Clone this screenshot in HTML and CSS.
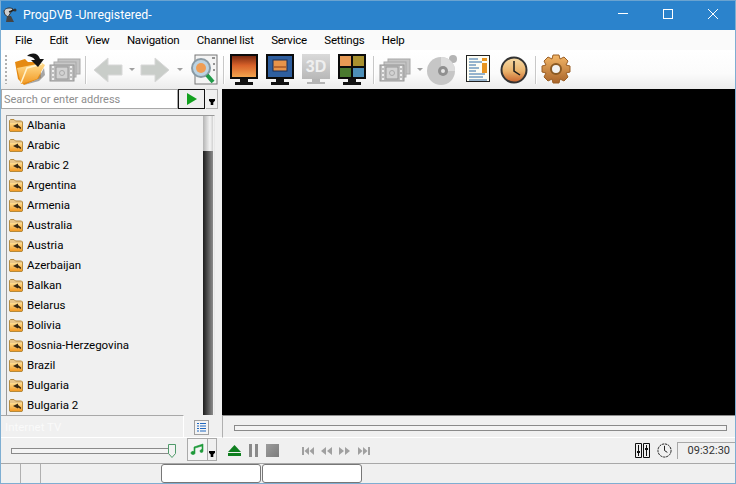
FILE: index.html
```html
<!DOCTYPE html>
<html lang="en">
<head>
<meta charset="utf-8">
<title>ProgDVB -Unregistered-</title>
<link rel="stylesheet" href="styles.css">
</head>
<body>
<svg class="sprite" aria-hidden="true">
  <defs>
    <linearGradient id="gOrange" x1="0" y1="0" x2="0" y2="1"><stop offset="0" stop-color="#ffdc8e"/><stop offset="1" stop-color="#f29a24"/></linearGradient>
    <linearGradient id="gSky" x1="0" y1="0" x2="0" y2="1"><stop offset="0" stop-color="#7a2a10"/><stop offset=".45" stop-color="#d9622a"/><stop offset="1" stop-color="#f2a44e"/></linearGradient>
    <linearGradient id="gGrey" x1="0" y1="0" x2="0" y2="1"><stop offset="0" stop-color="#dadada"/><stop offset="1" stop-color="#b8b8b8"/></linearGradient>
    <linearGradient id="gClock" x1="0" y1="0" x2="0" y2="1"><stop offset="0" stop-color="#f7dca8"/><stop offset=".55" stop-color="#eab36c"/><stop offset="1" stop-color="#c8622c"/></linearGradient>
    <linearGradient id="gGear" x1="0" y1="0" x2="0" y2="1"><stop offset="0" stop-color="#f4b768"/><stop offset="1" stop-color="#a8642a"/></linearGradient>
    <linearGradient id="gCtl" x1="0" y1="0" x2="1" y2="1"><stop offset="0" stop-color="#9c9c9c"/><stop offset="1" stop-color="#7c7c7c"/></linearGradient>
    <symbol id="folder" viewBox="0 0 14 13">
      <path d="M.5 3V1.500L1.500.5h3.500l1.500 1.500h6l1 1v9l-.5.5h-12l-.5-.5z" fill="#e8c588" stroke="#b58a3e"/>
      <rect x="1" y="4" width="12" height="8" fill="url(#gOrange)"/>
      <path d="M4 7l5-2.500v1.500l3 2.500v1.500l-3-1.500v1z" fill="#3a2a14"/>
    </symbol>
    <symbol id="film" viewBox="0 0 32 24">
      <rect x="9" y="1" width="22" height="15" fill="#c4c4c4" stroke="#a8a8a8"/>
      <rect x="5" y="4" width="22" height="15" fill="#c8c8c8" stroke="#a8a8a8"/>
      <rect x="1" y="7" width="24" height="16" fill="#bdbdbd" stroke="#969696"/>
      <rect x="7" y="9" width="12" height="12" fill="#d2d2d2" stroke="#999"/>
      <path d="M3 9h2M3 13h2M3 17h2M3 21h2M21 9h2M21 13h2M21 17h2M21 21h2" stroke="#eee" stroke-width="2"/>
      <circle cx="13" cy="15" r="2.500" fill="none" stroke="#aaa"/>
    </symbol>
    <symbol id="monitor" viewBox="0 0 28 32">
      <rect x="0" y="0" width="28" height="25" fill="#0c0c0c"/>
      <rect x="10" y="25" width="8" height="3" fill="#111"/>
      <rect x="5" y="28" width="18" height="3" fill="#111"/>
    </symbol>
    <symbol id="stem-arrow" viewBox="0 0 7 7">
      <path d="M0 0h7v2L5 4v3H2V4L0 2z" fill="#000"/>
    </symbol>
  </defs>
</svg>

<div class="window">
  <header class="titlebar">
    <svg class="app-icon" viewBox="0 0 16 16" width="16" height="16">
      <path d="M1 4c1-3 6-4 9-2L5 10C3 9 1 7 1 4z" fill="#cfcfcf" stroke="#333"/>
      <path d="M6 5l5-2" stroke="#222" stroke-width="1.500"/>
      <circle cx="12" cy="3" r="1.500" fill="#333"/>
      <path d="M4 9l-1 6h8L8 9z" fill="#444"/>
    </svg>
    <span class="title-text">ProgDVB -Unregistered-</span>
    <div class="caption-buttons">
      <button class="caption-btn"><svg viewBox="0 0 10 10" width="10" height="10"><path d="M0 4.500h10" stroke="#fff"/></svg></button>
      <button class="caption-btn"><svg viewBox="0 0 10 10" width="10" height="10"><rect x=".5" y=".5" width="9" height="9" fill="none" stroke="#fff"/></svg></button>
      <button class="caption-btn"><svg viewBox="0 0 10 10" width="10" height="10"><path d="M0 0l10 10M10 0L0 10" stroke="#fff"/></svg></button>
    </div>
  </header>

  <nav class="menubar">
    <span class="menu-item">File</span>
    <span class="menu-item">Edit</span>
    <span class="menu-item">View</span>
    <span class="menu-item">Navigation</span>
    <span class="menu-item">Channel list</span>
    <span class="menu-item">Service</span>
    <span class="menu-item">Settings</span>
    <span class="menu-item">Help</span>
  </nav>

  <div class="toolbar">
    <span class="grip"></span>
    <svg class="t-open" viewBox="0 0 32 33" width="32" height="33">
      <path d="M2 9l10-3 3 3 12 0 1 16-17 7-6-6z" fill="#e58a12"/>
      <path d="M8 31L4 15l25-5 3 2-8 14z" fill="url(#gOrange)"/>
      <path d="M8 30l6-15 15-4" fill="none" stroke="#fff2cc" stroke-width="1.500"/>
      <path d="M11 32l14-6 6-11 1 7-6 6z" fill="#8a8a8a" opacity=".75"/>
      <path d="M14 3c5-4 11-3 13 3l4 0-6 8-7-7 4 0c-2-3-5-4-8-4z" fill="#141414"/>
    </svg>
    <svg class="t-film" width="32" height="24"><use href="#film"/></svg>
    <span class="t-sep"></span>
    <svg class="t-back" viewBox="0 0 30 26" width="30" height="26"><path d="M15 1v7h14v10H15v7L1 13z" fill="#c9cdc9" stroke="#d8d8d8"/></svg>
    <span class="caret t-caret1"></span>
    <svg class="t-fwd" viewBox="0 0 30 26" width="30" height="26"><path d="M15 1v7H1v10h14v7l14-12z" fill="#c9cdc9" stroke="#d8d8d8"/></svg>
    <span class="caret t-caret2"></span>
    <svg class="t-preview" viewBox="0 0 27 32" width="27" height="32">
      <rect x="4" y="1" width="22" height="29" fill="#f4f4f4" stroke="#777"/>
      <path d="M21 4h3M22 10h2M22 16h2" stroke="#333"/>
      <circle cx="10" cy="14" r="9" fill="#bcd3e2" stroke="#8a9aa4" stroke-width="2"/>
      <circle cx="10" cy="14" r="5" fill="#ef9d55"/>
      <path d="M16 21l6 7" stroke="#1f9a48" stroke-width="4"/>
    </svg>
    <span class="t-sep t-sep2"></span>
    <svg class="t-mon1" width="28" height="32"><use href="#monitor"/><rect x="2" y="2" width="24" height="21" fill="url(#gSky)"/></svg>
    <svg class="t-mon" width="28" height="32"><use href="#monitor"/><rect x="2" y="2" width="24" height="21" fill="#2f5f9f"/><rect x="7" y="6" width="14" height="11" fill="#e8944a" stroke="#1c2f55"/><path d="M8 13h12" stroke="#8a3a14"/></svg>
    <svg class="t-mon" viewBox="0 0 28 32" width="28" height="32">
      <rect width="28" height="25" fill="url(#gGrey)"/>
      <rect x="10" y="25" width="8" height="3" fill="#b4b4b4"/><rect x="5" y="28" width="18" height="2" fill="#b4b4b4"/>
      <text class="t3d" x="14" y="18" text-anchor="middle">3D</text>
    </svg>
    <svg class="t-mon" width="28" height="32"><use href="#monitor"/><rect x="2" y="2" width="11" height="10" fill="#e79a55"/><rect x="15" y="2" width="11" height="10" fill="#a8912f"/><rect x="2" y="14" width="11" height="9" fill="#4a7a2f"/><rect x="15" y="14" width="11" height="9" fill="#4d8fb8"/></svg>
    <span class="t-sep t-sep3"></span>
    <svg class="t-film2" width="32" height="24"><use href="#film"/></svg>
    <span class="caret t-caret3"></span>
    <svg class="t-disc" viewBox="0 0 32 32" width="32" height="32">
      <circle cx="27" cy="5" r="4" fill="#b4b4b4"/>
      <circle cx="15" cy="17" r="14" fill="#c6c6c6"/>
      <path d="M15 3a14 14 0 0 1 14 14H15z" fill="#dcdcdc"/>
      <circle cx="17" cy="17" r="5" fill="#8f8f8f"/><circle cx="17" cy="17" r="2" fill="#e6e6e6"/>
    </svg>
    <svg class="t-info" viewBox="0 0 24 27" width="24" height="27">
      <rect x=".5" y=".5" width="23" height="26" fill="#fdfdf4" stroke="#222"/>
      <path d="M3 4h9M3 7h13M3 10h7M3 13h10M3 16h7M3 19h16M3 22h14M3 25h18" stroke="#2f6aa6"/>
      <rect x="16" y="3" width="5" height="3" fill="#e89420"/>
      <rect x="16" y="8" width="5" height="10" fill="#e89420"/>
    </svg>
    <svg class="t-clock" viewBox="0 0 28 28" width="28" height="28">
      <circle cx="14" cy="14" r="12.500" fill="url(#gClock)" stroke="#333" stroke-width="2"/>
      <path d="M14 5v10l6 4" fill="none" stroke="#1a1a1a" stroke-width="1.500"/>
    </svg>
    <span class="t-sep t-sep4"></span>
    <svg class="t-gear" viewBox="0 0 30 30" width="30" height="30">
      <path d="M12 1h6l1 4 4-2 4 4-2 4 4 1v6l-4 1 2 4-4 4-4-2-1 4h-6l-1-4-4 2-4-4 2-4-4-1v-6l4-1-2-4 4-4 4 2z" fill="url(#gGear)" stroke="#9a5e24"/>
      <circle cx="15" cy="15" r="5" fill="#f2f2f2" stroke="#8a5a24" stroke-width="2"/>
    </svg>
  </div>

  <main class="main">
    <aside class="side">
      <div class="addressbar">
        <input class="address" placeholder="Search or enter address" aria-label="address">
        <button class="go"><svg viewBox="0 0 12 12" width="12" height="12"><path d="M1 0l10 6-10 6z" fill="#12a01e"/></svg></button>
        <span class="drop"><svg width="6" height="6"><use href="#stem-arrow"/></svg></span>
      </div>
      <div class="listframe">
        <ul class="list">
          <li class="row"><svg class="fi"><use href="#folder"/></svg>Albania</li>
          <li class="row"><svg class="fi"><use href="#folder"/></svg>Arabic</li>
          <li class="row"><svg class="fi"><use href="#folder"/></svg>Arabic 2</li>
          <li class="row"><svg class="fi"><use href="#folder"/></svg>Argentina</li>
          <li class="row"><svg class="fi"><use href="#folder"/></svg>Armenia</li>
          <li class="row"><svg class="fi"><use href="#folder"/></svg>Australia</li>
          <li class="row"><svg class="fi"><use href="#folder"/></svg>Austria</li>
          <li class="row"><svg class="fi"><use href="#folder"/></svg>Azerbaijan</li>
          <li class="row"><svg class="fi"><use href="#folder"/></svg>Balkan</li>
          <li class="row"><svg class="fi"><use href="#folder"/></svg>Belarus</li>
          <li class="row"><svg class="fi"><use href="#folder"/></svg>Bolivia</li>
          <li class="row"><svg class="fi"><use href="#folder"/></svg>Bosnia-Herzegovina</li>
          <li class="row"><svg class="fi"><use href="#folder"/></svg>Brazil</li>
          <li class="row"><svg class="fi"><use href="#folder"/></svg>Bulgaria</li>
          <li class="row"><svg class="fi"><use href="#folder"/></svg>Bulgaria 2</li>
        </ul>
        <div class="scroll"><div class="thumb"></div><div class="track"></div></div>
      </div>
    </aside>
    <div class="video"></div>
  </main>

  <div class="subbar">
    <div class="itv"><span class="itv-label">Internet TV</span></div>
    <div class="itv-btn">
      <svg viewBox="0 0 15 15" width="15" height="15">
        <rect x=".5" y=".5" width="14" height="14" fill="#f4f4f4" stroke="#a0a0a0"/>
        <path d="M3 3.500h2M3 6h2M3 8.500h2M3 11h2M6 3.500h6M6 6h6M6 8.500h6M6 11h6" stroke="#2068c0" stroke-width="1.200"/>
      </svg>
    </div>
    <div class="seek"><div class="seekbar"></div></div>
  </div>

  <div class="controls">
    <div class="volume"><div class="volbar"></div>
      <svg class="volthumb" viewBox="0 0 8 14" width="8" height="14"><path d="M.5.5h7v9L4 13.500.5 9.500z" fill="#f2f2f2" stroke="#4f9a6a"/></svg>
    </div>
    <div class="audio">
      <span class="audio-main"><svg viewBox="0 0 15 13" width="15" height="13"><path d="M1 10c0-2 3-2 3-1V4l9-3v7c0 2-3 2-3 0 0-1 2-2 2-1V3L5 5v5c0 2-4 2-4 0z" fill="#1f9a3a" stroke="#1f9a3a" stroke-width=".6"/></svg></span>
      <span class="audio-drop"><svg width="6" height="6"><use href="#stem-arrow"/></svg></span>
    </div>
    <svg class="c-eject" viewBox="0 0 13 11" width="13" height="11"><path d="M6.500 0L13 7H0z" fill="#0f7f1f"/><rect y="8" width="13" height="3" fill="#0f7f1f"/></svg>
    <svg class="c-pause" viewBox="0 0 9 13" width="9" height="13"><path d="M0 0h3v13H0zM6 0h3v13H6z" fill="#8a8a8a"/></svg>
    <svg class="c-stop" viewBox="0 0 13 13" width="13" height="13"><rect width="13" height="13" fill="url(#gCtl)"/></svg>
    <svg class="c-prev" viewBox="0 0 12 8" width="12" height="8"><path d="M0 0h2v8H0zM7 0v8L2.500 4zM12 0v8L7.500 4z" fill="#a0a0a0"/></svg>
    <svg class="c-rew" viewBox="0 0 12 8" width="12" height="8"><path d="M6 0v8L1 4zM12 0v8L7 4z" fill="#a0a0a0"/></svg>
    <svg class="c-fwd" viewBox="0 0 12 8" width="12" height="8"><path d="M0 0v8l5-4zM6 0v8l5-4z" fill="#a0a0a0"/></svg>
    <svg class="c-next" viewBox="0 0 12 8" width="12" height="8"><path d="M0 0v8l4.500-4zM5 0v8l4.500-4zM10 0h2v8h-2z" fill="#a0a0a0"/></svg>
    <svg class="c-mixer" viewBox="0 0 15 15" width="15" height="15">
      <path d="M.5.5h6v14h-6zM8.500.5h6v14h-6z" fill="none" stroke="#111"/>
      <path d="M3.500 2v11M11.500 2v11" stroke="#111"/><path d="M2 8h3v2H2zM10 5h3v2h-3z" fill="#111"/>
    </svg>
    <svg class="c-clock" viewBox="0 0 16 16" width="15" height="15">
      <circle cx="8" cy="8" r="7" fill="none" stroke="#111" stroke-dasharray="2.500 .8"/>
      <path d="M8 3v5l3 2" fill="none" stroke="#111"/>
    </svg>
    <output class="time">09:32:30</output>
  </div>

  <footer class="status">
    <span class="s-cell s-a"></span>
    <span class="s-cell s-b"></span>
    <span class="s-cell s-c"></span>
    <span class="s-box"></span>
    <span class="s-box"></span>
  </footer>
</div>
</body>
</html>
```
FILE: styles.css
```css
* { box-sizing: border-box; }
html, body { margin: 0; padding: 0; }
body { font-family: Roboto, "Liberation Sans", sans-serif; font-size: 11.5px; color: #000; overflow: hidden; background: #f0f0f0; }
.sprite { display: block; width: 0; height: 0; }
svg { display: block; flex: none; }

.window { width: 736px; height: 484px; display: flex; flex-direction: column; background: #f0f0f0; border-left: 1px solid #7eaed2; border-right: 1px solid #7eaed2; border-bottom: 1px solid #7eaed2; border-top: 1px solid #6aa3d0; }

.titlebar { height: 29px; flex: none; background: #2b83cc; display: flex; align-items: center; color: #fff; padding-left: 2px; }
.app-icon { margin-top: -1px; }
.title-text { margin-left: 4px; font-size: 12.3px; margin-top: -1px; }
.caption-buttons { margin-left: auto; display: flex; height: 100%; }
.caption-btn { width: 45px; height: 100%; border: 0; background: transparent; padding: 0; display: flex; align-items: center; justify-content: center; margin-top: -2px; }

.menubar { height: 20px; flex: none; background: #fafafa; display: flex; align-items: center; padding: 0 0 1px 14px; gap: 17.5px; letter-spacing: -.25px; }
.menu-item { line-height: 18px; }

.toolbar { height: 39px; flex: none; display: flex; align-items: center; background: linear-gradient(#ffffff, #fbfbfb 60%, #ececec); }
.grip { width: 2px; height: 29px; margin-left: 4px; background-image: linear-gradient(#b0b0b0 50%, transparent 50%); background-size: 2px 4px; }
.t-sep { height: 28px; background: #c8c8c8; border-right: 1px solid #fff; width: 2px; flex: none; }
.caret { width: 0; height: 0; border-left: 3px solid transparent; border-right: 3px solid transparent; border-top: 3px solid #a0a0a0; }
.t-open { margin-left: 6px; }
.t-film { margin-left: 4px; }
.t-film + .t-sep { margin-left: 4px; }
.t-back { margin-left: 6px; }
.t-caret1 { margin-left: 6px; }
.t-fwd { margin-left: 5px; }
.t-caret2 { margin-left: 7px; }
.t-preview { margin-left: 8px; }
.t-sep2 { margin-left: 5px; }
.t-mon1 { margin-left: 5px; }
.t-mon { margin-left: 8px; }
.t3d { font-family: "Liberation Sans", sans-serif; font-size: 16px; font-weight: 700; fill: #efefef; }
.t-sep3 { margin-left: 7px; }
.t-film2 { margin-left: 4px; }
.t-caret3 { margin-left: 6px; }
.t-disc { margin-left: 3px; }
.t-info { margin-left: 8px; margin-top: -2px; }
.t-clock { margin-left: 10px; }
.t-sep4 { margin-left: 7px; }
.t-gear { margin-left: 4px; margin-top: -1px; }

.main { height: 326px; flex: none; display: flex; }
.side { width: 221px; flex: none; padding-right: 4px; display: flex; flex-direction: column; }
.video { flex: 1; background: #000; }

.addressbar { height: 20px; flex: none; display: flex; }
.address { width: 177px; height: 20px; border: 1px solid #a8a8a8; font-family: inherit; font-size: 11px; padding: 0 2px; background: #fff; outline: 0; }
.address::placeholder { color: #8e8e8e; opacity: 1; }
.go { width: 27px; height: 20px; border: 1px solid #111; background: #efefef; padding: 0; display: flex; align-items: center; justify-content: center; }
.drop { width: 12px; height: 20px; margin-left: 1px; border: 1px solid #b0b0b0; border-left: 0; background: #f0f0f0; display: flex; justify-content: center; align-items: flex-end; padding-bottom: 3px; }

.listframe { flex: 1; margin: 6px 3px 0 5px; display: flex; border: 1px solid #9a9a9a; border-bottom: 0; border-right-color: #e8e8e8; overflow: hidden; min-height: 0; padding-right: 1px; }
.list { flex: 1; margin: 0; padding: 0; list-style: none; min-width: 0; }
.row { height: 20px; display: flex; align-items: center; padding: 0 0 2px 2px; line-height: 18px; white-space: nowrap; }
.fi { width: 14px; height: 13px; margin-right: 4px; }
.scroll { width: 10px; flex: none; display: flex; flex-direction: column; }
.thumb { height: 35px; flex: none; background: linear-gradient(90deg, #b4b4b4, #f4f4f4 70%, #d0d0d0); }
.track { flex: 1; background: linear-gradient(90deg, #1c1c1c, #8c8c8c); }

.subbar { height: 23px; flex: none; display: flex; }
.itv { width: 183px; flex: none; border-top: 1px solid #a8a8a8; border-right: 1px solid #fff; border-bottom: 1px solid #fff; padding: 1px 0 0 4px; line-height: 20px; }
.itv-label { color: #fafafa; }
.itv-btn { width: 38px; flex: none; padding: 5px 0 0 10px; border-bottom: 1px solid #fff; }
.seek { flex: 1; border-top: 1px solid #8c8c8c; border-left: 1px solid #b0b0b0; border-bottom: 1px solid #fff; padding: 9px 8px 0 11px; }
.seekbar { height: 6px; border: 1px solid #8a8a8a; background: #f4f4f4; }

.controls { height: 25px; flex: none; display: flex; align-items: center; }
.volume { width: 165px; margin-left: 10px; flex: none; display: flex; align-items: center; }
.volbar { width: 159px; height: 6px; border: 1px solid #8a8a8a; background: #f4f4f4; }
.volthumb { margin-left: -2px; }
.audio { width: 30px; height: 23px; margin-left: 11px; margin-top: -2px; flex: none; display: flex; border: 1px solid #aaa; }
.audio-main { width: 20px; border-right: 1px solid #aaa; display: flex; align-items: center; justify-content: center; background: #f4f4f4; }
.audio-drop { flex: 1; display: flex; justify-content: center; align-items: flex-end; padding-bottom: 3px; }
.c-eject { margin-left: 11px; }
.c-pause { margin-left: 8px; }
.c-stop { margin-left: 8px; }
.c-prev { margin-left: 23px; }
.c-rew { margin-left: 6px; }
.c-fwd { margin-left: 7px; }
.c-next { margin-left: 7px; }
.c-mixer { margin-left: auto; }
.c-clock { margin-left: 7px; }
.time { width: 58px; height: 17px; margin-left: 5px; border-left: 1px solid #a8a8a8; border-top: 1px solid #a8a8a8; text-align: right; padding-right: 5px; line-height: 16px; color: #333; font-size: 11px; }

.status { flex: 1; display: flex; border-top: 1px solid #a8a8a8; min-height: 0; }
.s-cell { width: 20px; border-right: 1px solid #b0b0b0; flex: none; }
.s-c { border-right: 0; width: 120px; }
.s-box { width: 100px; margin-right: 1px; background: #fff; border: 1px solid #777; border-radius: 3px; flex: none; }
```
